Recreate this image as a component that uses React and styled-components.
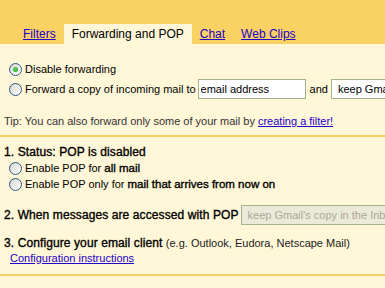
import React from 'react'
import styled, {createGlobalStyle} from 'styled-components';

const GlobalStyle = createGlobalStyle`
    html, body{
        margin:0;
        padding:0;
        background:#fff7d7;
        overflow:hidden;
    }
    body{
        font-family:"Liberation Sans", Arial, sans-serif;
        font-size:11px;
        color:#000;
    }
`;

const tabs = [
    {label:'Filters'},
    {label:'Forwarding and POP', active:true},
    {label:'Chat'},
    {label:'Web Clips'},
];

export default function App() {
    return (
        <>
            <GlobalStyle/>
            <TabBar>
                {tabs.map(t => (
                    <Tab key={t.label} $active={t.active}>
                        {t.active ? t.label : <Link href="#">{t.label}</Link>}
                    </Tab>
                ))}
            </TabBar>

            <Section $top={15} $bottom={7}>
                <OptionRow $h={20}>
                    <Radio $checked/>
                    Disable forwarding
                </OptionRow>
                <OptionRow $h={20}>
                    <Radio/>
                    Forward a copy of incoming mail to
                    <TextInput type="text" defaultValue="email address"/>
                    and
                    <SelectBox $width={160}>keep Gmail's copy in the Inbox</SelectBox>
                </OptionRow>
                <Tip>
                    Tip: You can also forward only some of your mail by <Link href="#">creating a filter!</Link>
                </Tip>
            </Section>
            <Divider/>

            <Section $top={8} $bottom={9}>
                <Heading>1. Status: POP is disabled</Heading>
                <OptionRow $h={16}>
                    <Radio/>
                    Enable POP for&nbsp;<Strong>all mail</Strong>
                </OptionRow>
                <OptionRow $h={16}>
                    <Radio/>
                    Enable POP only for&nbsp;<Strong>mail that arrives from now on</Strong>
                </OptionRow>

                <StepRow>
                    <Heading>2. When messages are accessed with POP</Heading>
                    <SelectBox $disabled $width={170}>keep Gmail's copy in the Inbox</SelectBox>
                </StepRow>

                <Heading $space={11}>
                    3. Configure your email client <Note>(e.g. Outlook, Eudora, Netscape Mail)</Note>
                </Heading>
                <SubLink><Link href="#">Configuration instructions</Link></SubLink>
            </Section>
            <Divider/>
        </>
    )
}

const TabBar = styled.div`
    display:flex;
    align-items:flex-end;
    height:44px;
    padding-left:15px;
    background:#fad163;
`;
const Tab = styled.div`
    height:20px;
    line-height:21px;
    padding:0 8px;
    font-size:12px;
    white-space:nowrap;
    background:${p => p.$active ? '#fff7d7' : 'transparent'};
`;
const Link = styled.a`
    color:#2200cc;
    text-decoration:underline;
`;
const Section = styled.div`
    padding:${p => p.$top}px 0 ${p => p.$bottom}px 4px;
`;
const OptionRow = styled.div`
    display:flex;
    align-items:center;
    height:${p => p.$h}px;
    padding-left:5px;
    white-space:nowrap;
`;
const Strong = styled.span`
    font-size:11.5px;
    color:#000;
    -webkit-text-stroke:0.35px #000;
`;
const Radio = styled.span`
    position:relative;
    flex:none;
    width:11px;
    height:11px;
    margin-right:3px;
    border:1px solid #2a5a86;
    border-radius:50%;
    background:linear-gradient(135deg, #d4d4cc 0%, #ecebe6 50%, #ffffff 100%);

    &::after{
        content:'';
        display:${p => p.$checked ? 'block' : 'none'};
        position:absolute;
        left:3px;
        top:3px;
        width:5px;
        height:5px;
        border-radius:50%;
        background:radial-gradient(circle at 40% 40%, #5fd35f, #1f9a1f);
    }
`;
const TextInput = styled.input`
    box-sizing:border-box;
    width:108px;
    height:20px;
    margin:0 4px 0 2px;
    padding:0 2px;
    border:1px solid #a3b38a;
    background:#fff;
    font-family:inherit;
    font-size:11px;
    color:#000;
    outline:none;
`;
const SelectBox = styled.div`
    box-sizing:border-box;
    flex:none;
    width:${p => p.$width}px;
    height:20px;
    line-height:18px;
    margin-left:${p => p.$disabled ? 2 : 3}px;
    padding-left:6px;
    border:1px solid #a3b38a;
    background:${p => p.$disabled ? '#ebe9d7' : '#fff'};
    color:${p => p.$disabled ? '#aca899' : '#000'};
    font-size:11px;
    letter-spacing:0;
    -webkit-text-stroke:0;
    white-space:nowrap;
    overflow:hidden;
`;
const Tip = styled.div`
    margin-top:15px;
    line-height:14px;
    color:#333;
    white-space:nowrap;
`;
const Divider = styled.div`
    height:2px;
    background:#f6cf62;
`;
const Heading = styled.div`
    margin-top:${p => p.$space || 0}px;
    line-height:15px;
    font-size:12px;
    letter-spacing:0.1px;
    color:#000;
    -webkit-text-stroke:0.35px #000;
    white-space:nowrap;
`;
const Note = styled.span`
    font-size:11px;
    letter-spacing:0;
    color:#222;
    -webkit-text-stroke:0;
`;
const StepRow = styled.div`
    display:flex;
    align-items:center;
    margin-top:13px;
    white-space:nowrap;
`;
const SubLink = styled.div`
    padding-left:6px;
    line-height:14px;
`;
